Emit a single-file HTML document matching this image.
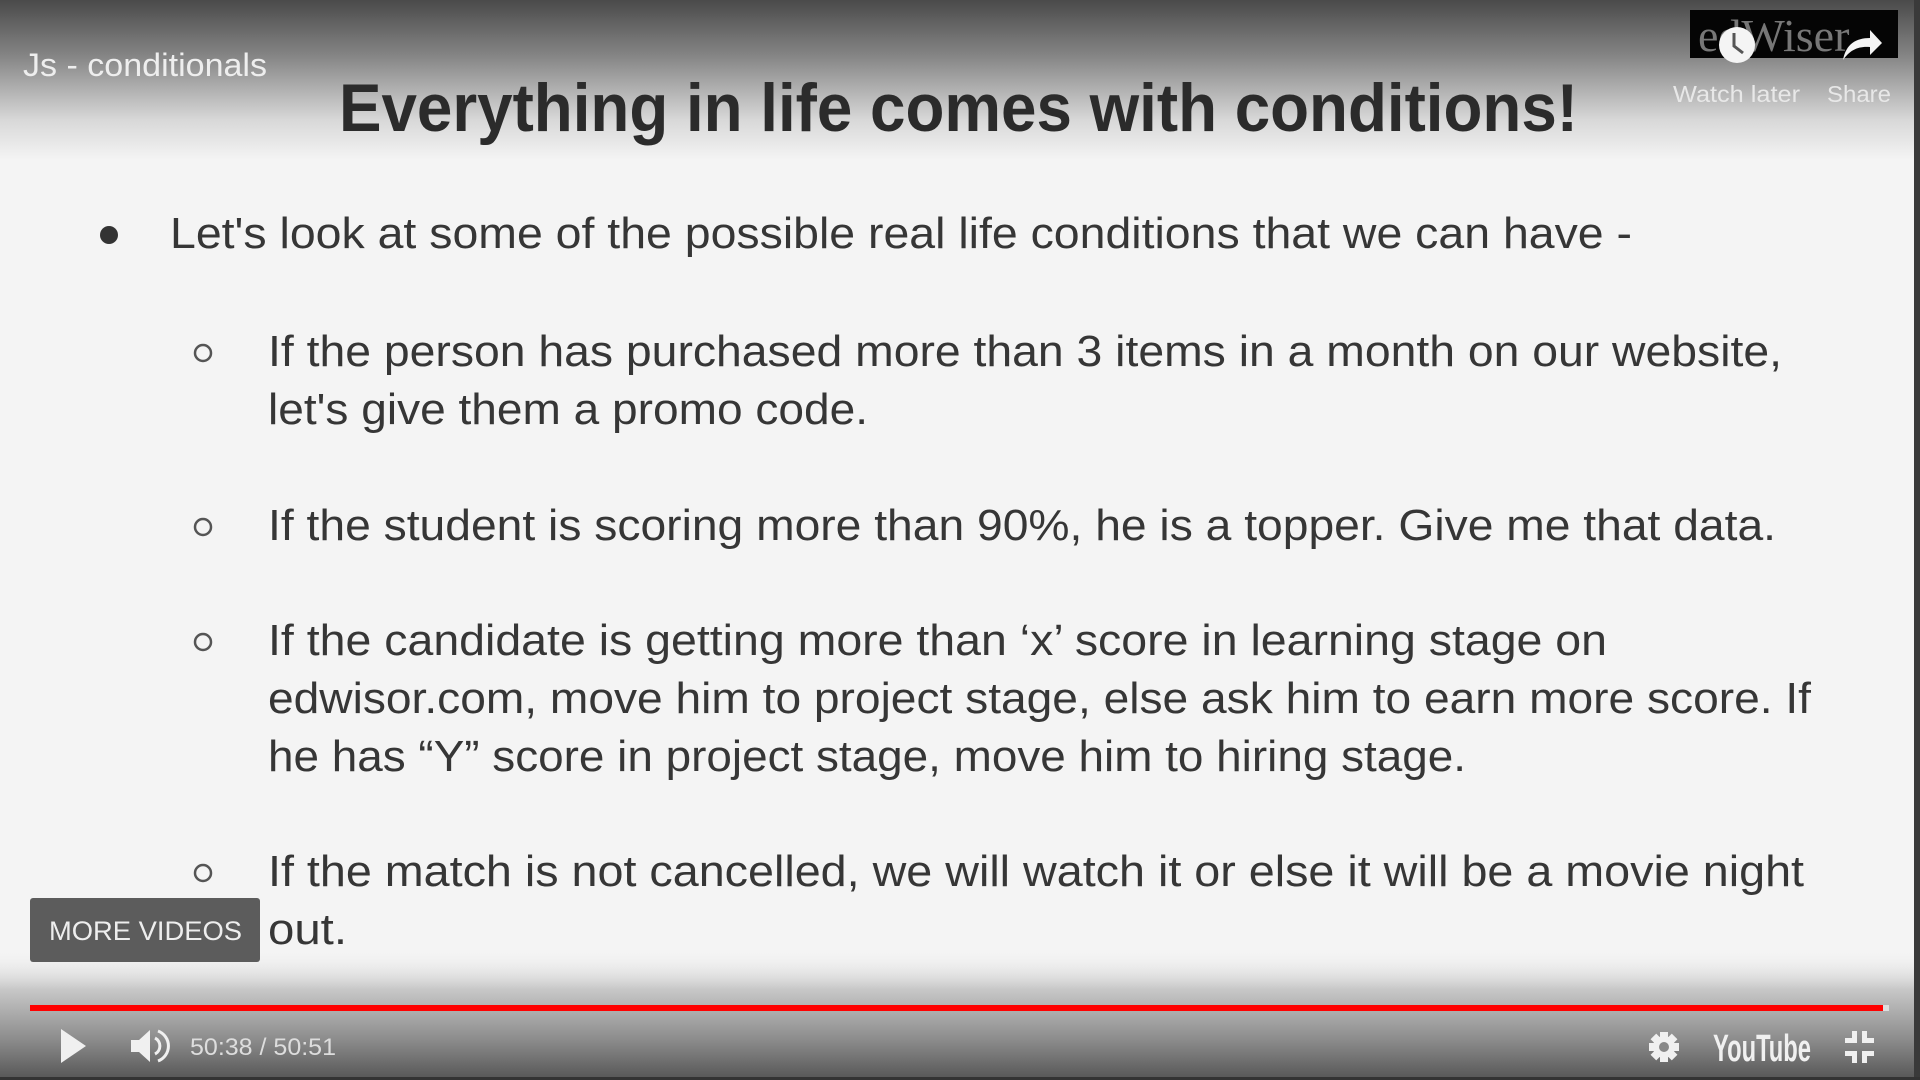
<!DOCTYPE html>
<html><head><meta charset="utf-8"><style>
html,body{margin:0;padding:0;width:1920px;height:1080px;overflow:hidden;background:#f4f4f4}
svg{display:block}
</style></head><body>
<svg width="1920" height="1080" viewBox="0 0 1920 1080" xmlns="http://www.w3.org/2000/svg">
<defs>
<linearGradient id="top" x1="0" y1="0" x2="0" y2="1">
<stop offset="0" stop-color="#4a4a4a"/><stop offset="0.35" stop-color="#858585"/><stop offset="0.75" stop-color="#d8d8d8"/><stop offset="1" stop-color="#f4f4f4"/>
</linearGradient>
<linearGradient id="bot" x1="0" y1="0" x2="0" y2="1">
<stop offset="0" stop-color="#f2f2f2" stop-opacity="0"/><stop offset="0.3" stop-color="#c8c8c8"/><stop offset="0.7" stop-color="#8a8a8a"/><stop offset="1" stop-color="#555"/>
</linearGradient>
</defs>
<rect width="1920" height="1080" fill="#f4f4f4"/>
<rect width="1920" height="160" fill="url(#top)"/>
<rect y="950" width="1920" height="130" fill="url(#bot)"/>
<rect x="1914" y="0" width="6" height="1080" fill="#3a3a3a"/>
<rect x="0" y="1077" width="1920" height="3" fill="#333"/>

<g font-family="Liberation Sans, sans-serif" fill="#363636">
<text x="339" y="131" font-size="68" font-weight="bold" fill="#2b2b2b" textLength="1239" lengthAdjust="spacingAndGlyphs">Everything in life comes with conditions!</text>
<circle cx="109" cy="235" r="9" fill="#333"/>
<text x="170" y="248" font-size="44" textLength="1462" lengthAdjust="spacingAndGlyphs">Let's look at some of the possible real life conditions that we can have -</text>
<g fill="none" stroke="#555" stroke-width="2.5">
<circle cx="203" cy="353" r="8"/><circle cx="203" cy="527" r="8"/><circle cx="203" cy="642" r="8"/><circle cx="203" cy="873" r="8"/>
</g>
<text x="268" y="366" font-size="44" textLength="1514" lengthAdjust="spacingAndGlyphs">If the person has purchased more than 3 items in a month on our website,</text>
<text x="268" y="424" font-size="44" textLength="600" lengthAdjust="spacingAndGlyphs">let's give them a promo code.</text>
<text x="268" y="540" font-size="44" textLength="1508" lengthAdjust="spacingAndGlyphs">If the student is scoring more than 90%, he is a topper. Give me that data.</text>
<text x="268" y="655" font-size="44" textLength="1339" lengthAdjust="spacingAndGlyphs">If the candidate is getting more than ‘x’ score in learning stage on</text>
<text x="268" y="713" font-size="44" textLength="1543" lengthAdjust="spacingAndGlyphs">edwisor.com, move him to project stage, else ask him to earn more score. If</text>
<text x="268" y="771" font-size="44" textLength="1198" lengthAdjust="spacingAndGlyphs">he has “Y” score in project stage, move him to hiring stage.</text>
<text x="268" y="886" font-size="44" textLength="1536" lengthAdjust="spacingAndGlyphs">If the match is not cancelled, we will watch it or else it will be a movie night</text>
<text x="268" y="944" font-size="44" textLength="79" lengthAdjust="spacingAndGlyphs">out.</text>
</g>

<!-- top overlay -->
<text x="23" y="76" font-family="Liberation Sans, sans-serif" font-size="32" fill="#eeeeee" textLength="244" lengthAdjust="spacingAndGlyphs">Js - conditionals</text>
<rect x="1690" y="10" width="208" height="48" fill="#050505"/>
<text x="1698" y="51" font-family="Liberation Serif, serif" font-size="46" fill="#777">edWiser</text>
<circle cx="1737" cy="45" r="18" fill="#f4f4f4"/>
<path d="M1734 33 L1734 46 L1743 53" stroke="#555" stroke-width="3" fill="none"/>
<path d="M1843 60 C1846 44 1856 38 1870 38 L1870 30 L1882 43 L1870 55 L1870 47 C1858 46 1850 50 1843 60 Z" fill="#f4f4f4"/>
<text x="1673" y="102" font-family="Liberation Sans, sans-serif" font-size="23" fill="#e8e8e8" textLength="127" lengthAdjust="spacingAndGlyphs">Watch later</text>
<text x="1827" y="102" font-family="Liberation Sans, sans-serif" font-size="23" fill="#e8e8e8" textLength="64" lengthAdjust="spacingAndGlyphs">Share</text>

<!-- more videos -->
<rect x="30" y="898" width="230" height="64" rx="3" fill="#5c5c5c"/>
<text x="49" y="940" font-family="Liberation Sans, sans-serif" font-size="27" fill="#eeeeee" textLength="193" lengthAdjust="spacingAndGlyphs">MORE VIDEOS</text>

<!-- progress -->
<rect x="30" y="1005" width="1855" height="6" fill="#ff0000"/>
<rect x="1883" y="1005" width="6" height="6" fill="#ddd"/>

<!-- controls -->
<path d="M61 1029 L86 1046 L61 1063 Z" fill="#f0f0f0"/>
<path d="M131 1040 L139 1040 L150 1030 L150 1062 L139 1052 L131 1052 Z" fill="#f0f0f0"/>
<path d="M155 1038 A9 9 0 0 1 155 1054" stroke="#f0f0f0" stroke-width="3" fill="none"/>
<path d="M158 1031 A16 16 0 0 1 158 1061" stroke="#f0f0f0" stroke-width="3" fill="none"/>
<text x="190" y="1055" font-family="Liberation Sans, sans-serif" font-size="24" fill="#dddddd" textLength="146" lengthAdjust="spacingAndGlyphs">50:38 / 50:51</text>
<g transform="translate(1664 1047)" fill="#f0f0f0">
<circle r="11"/>
<g><rect x="-4" y="-15" width="8" height="30"/><rect x="-15" y="-4" width="30" height="8"/>
<rect x="-4" y="-15" width="8" height="30" transform="rotate(45)"/><rect x="-4" y="-15" width="8" height="30" transform="rotate(-45)"/></g>
<circle r="5" fill="#888"/>
</g>
<text x="1713" y="1061" font-family="Liberation Sans, sans-serif" font-size="38" font-weight="bold" fill="#f0f0f0" textLength="98" lengthAdjust="spacingAndGlyphs">YouTube</text>
<g fill="#f0f0f0">
<path d="M1852 1031 h5 v12 h-12 v-5 h7 Z"/>
<path d="M1867 1031 h-5 v12 h12 v-5 h-7 Z"/>
<path d="M1852 1063 h5 v-12 h-12 v5 h7 Z"/>
<path d="M1867 1063 h-5 v-12 h12 v5 h-7 Z"/>
</g>
</svg>
</body></html>
